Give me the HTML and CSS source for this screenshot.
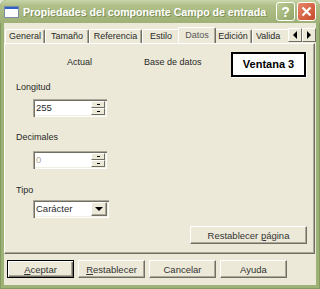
FILE: index.html
```html
<!DOCTYPE html>
<html lang="es">
<head>
  <meta charset="UTF-8" />
  <title>Propiedades del componente Campo de entrada</title>
  <link rel="stylesheet" href="styles.css">
</head>
<body>

<div class="window">
  <!-- Title bar -->
  <div class="titlebar">
    <svg class="app-icon" width="15" height="12" viewBox="0 0 15 12">
      <rect x="0.5" y="0.5" width="14" height="11" fill="#fff" stroke="#7a8aa8"/>
      <rect x="1" y="1" width="13" height="2" fill="#3060c8"/>
    </svg>
    <span class="title">Propiedades del componente Campo de entrada</span>
    <div class="tb-btn help">?</div>
    <div class="tb-btn close">
      <svg width="11" height="11" viewBox="0 0 11 11">
        <path d="M1.5 1.5 L9.5 9.5 M9.5 1.5 L1.5 9.5" stroke="#fff" stroke-width="2.2"/>
      </svg>
    </div>
  </div>

  <div class="client">
    <!-- Tabs -->
    <div class="tab-row">
      <div class="tabs">
        <div class="tab t-general">General</div>
        <div class="tab t-tamano">Tamaño</div>
        <div class="tab t-ref">Referencia</div>
        <div class="tab t-estilo">Estilo</div>
        <div class="tab t-datos active">Datos</div>
        <div class="tab t-edicion">Edición</div>
        <div class="tab t-valida">Valida</div>
      </div>
      <div class="tab-scroll">
        <div class="arrow-btn"><span class="tri left"></span></div>
        <div class="arrow-btn"><span class="tri right"></span></div>
      </div>
    </div>

    <!-- Tab page -->
    <div class="panel">
      <div class="heads">
        <span class="head-actual">Actual</span>
        <span class="head-bd">Base de datos</span>
        <div class="ventana">Ventana 3</div>
      </div>

      <div class="label l-longitud">Longitud</div>
      <div class="spin s-longitud">
        <div class="field">255</div>
        <div class="spin-btns">
          <div class="spin-btn"><span class="tiny"></span></div>
          <div class="spin-btn"><span class="tiny"></span></div>
        </div>
      </div>

      <div class="label l-decimales">Decimales</div>
      <div class="spin s-decimales disabled">
        <div class="field">0</div>
        <div class="spin-btns">
          <div class="spin-btn"><span class="tiny"></span></div>
          <div class="spin-btn"><span class="tiny"></span></div>
        </div>
      </div>

      <div class="label l-tipo">Tipo</div>
      <div class="combo">
        <div class="field">Carácter</div>
        <div class="drop-btn"><span class="tri down"></span></div>
      </div>

      <div class="panel-footer">
        <button class="btn btn-wide">Restablecer <u>p</u>ágina</button>
      </div>
    </div>

    <!-- Dialog buttons -->
    <div class="actions">
      <button class="btn default"><u>A</u>ceptar</button>
      <button class="btn"><u>R</u>establecer</button>
      <button class="btn">Cancelar</button>
      <button class="btn">Ayuda</button>
    </div>
  </div>
</div>

</body>
</html>
```

FILE: styles.css
```css
html { background: #dfe3d2; }

body {
  margin: 0;
  font-family: 'Liberation Sans', Arial, sans-serif;
  font-size: 9px;
  color: #2a2a2a;
}

.window {
  width: 320px;
  height: 289px;
  display: flex;
  flex-direction: column;
  background: #9db276;
  border-radius: 7px 7px 0 0;
  overflow: hidden;
  box-shadow: inset 1px 0 #86995f, inset -1px 0 #86995f, inset 0 -1px #86995f;
}

/* title bar */
.titlebar {
  height: 23px;
  display: flex;
  align-items: center;
  padding: 0 4px 0 4px;
  background: linear-gradient(#c9d5ab, #afbf88 25%, #a5b67d 70%, #9fb176);
  color: #fff;
}

.app-icon { margin: 1px 4px 0 0; flex: none; }

.title {
  flex: 1;
  font-weight: bold;
  font-size: 10.6px;
  white-space: nowrap;
  overflow: hidden;
  text-shadow: 1px 1px #7e9058;
}

.tb-btn {
  width: 17px;
  height: 17px;
  border: 1px solid #fff;
  border-radius: 3px;
  display: flex;
  align-items: center;
  justify-content: center;
  flex: none;
}

.help {
  background: linear-gradient(135deg, #bccb93, #8fa566);
  color: #fff;
  font-weight: bold;
  font-size: 14px;
  margin-right: 2px;
}

.close {
  background: linear-gradient(135deg, #e7866a, #c8492a);
}

/* client area */
.client {
  flex: 1;
  margin: 0 4px 4px;
  background: #ece9d8;
  display: flex;
  flex-direction: column;
}

.tab-row {
  height: 20px;
  display: flex;
  align-items: flex-end;
}

.tabs {
  flex: 1;
  display: flex;
  align-items: flex-end;
  overflow: hidden;
  padding-left: 1px;
  height: 20px;
}

.tab {
  height: 13px;
  line-height: 13px;
  text-align: center;
  border-top: 1px solid #fff;
  border-left: 1px solid #fff;
  border-right: 1px solid #716f64;
  box-shadow: inset -1px 0 #aca899;
  border-radius: 2px 2px 0 0;
  white-space: nowrap;
  overflow: hidden;
  flex: none;
}

.tab.active {
  height: 16px;
  line-height: 14px;
  margin: 0 -2px -1px;
  position: relative;
  z-index: 1;
  background: #ece9d8;
  color: #555;
}

.t-general { width: 38px; }
.t-tamano { width: 42px; }
.t-ref { width: 51px; }
.t-estilo { width: 36px; }
.t-datos { width: 36px; }
.t-edicion { width: 36px; }
.t-valida { width: 40px; text-align: left; padding-left: 3px; border-right: 0; box-shadow: none; }

.tab-scroll {
  display: flex;
  margin-bottom: 1px;
  flex: none;
}

.arrow-btn {
  width: 12px;
  height: 12px;
  border: 1px solid;
  border-color: #fff #716f64 #716f64 #fff;
  background: #ece9d8;
  display: flex;
  align-items: center;
  justify-content: center;
}

.tri { width: 0; height: 0; border: 4px solid transparent; }
.tri.left { border-right-color: #000; border-left-width: 0; }
.tri.right { border-left-color: #000; border-right-width: 0; }
.tri.down { border-top-color: #000; border-bottom-width: 0; border-width: 4px 4px 0; }

/* tab page */
.panel {
  height: 209px;
  margin-right: 1px;
  border: 1px solid;
  border-color: #fff #716f64 #716f64 #fff;
  box-shadow: inset -1px -1px #aca899;
  display: flex;
  flex-direction: column;
  padding-left: 11px;
}

.heads {
  display: flex;
  align-items: center;
  height: 24px;
  margin-top: 8px;
}

.head-actual, .head-bd { margin-bottom: 4px; }
.head-actual { margin-left: 51px; width: 77px; }
.head-bd { width: 87px; }

.ventana {
  width: 71px;
  height: 21px;
  border: 2px solid #000;
  box-shadow: 1px 1px #fff;
  background: #fff;
  font-weight: bold;
  font-size: 11px;
  display: flex;
  align-items: center;
  justify-content: center;
  color: #000;
}

.label { height: 12px; line-height: 12px; }
.l-longitud { margin-top: 5px; }
.l-decimales { margin-top: 14px; }
.l-tipo { margin-top: 15px; }

.spin, .combo {
  display: flex;
  margin-left: 17px;
  height: 14px;
  padding: 2px;
  background: #fff;
  box-shadow: inset 1px 1px #aca899, inset 2px 2px #716f64, inset -1px -1px #fff, inset -2px -2px #f1efe2;
}

.spin { width: 70px; }
.s-longitud { margin-top: 6px; }
.s-decimales { margin-top: 8px; }

.field {
  flex: 1;
  line-height: 14px;
  padding-left: 1px;
  font-size: 9.5px;
}

.disabled .field { color: #aca899; }

.spin-btns {
  width: 14px;
  display: flex;
  flex-direction: column;
}

.spin-btn {
  flex: 1;
  border: 1px solid;
  border-color: #fff #716f64 #716f64 #fff;
  background: #ece9d8;
  display: flex;
  align-items: center;
  justify-content: center;
}

.tiny { width: 3px; height: 1px; background: #000; }

.combo {
  width: 72px;
  margin-top: 4px;
}

.drop-btn {
  width: 14px;
  border: 1px solid;
  border-color: #fff #716f64 #716f64 #fff;
  box-shadow: inset -1px -1px #aca899;
  background: #ece9d8;
  display: flex;
  align-items: center;
  justify-content: center;
}

.panel-footer {
  display: flex;
  justify-content: flex-end;
  margin-top: 8px;
  padding-right: 7px;
}

/* buttons */
.btn {
  height: 18px;
  padding: 0;
  font-family: inherit;
  font-size: 9.5px;
  color: #333;
  background: #ece9d8;
  border: 1px solid;
  border-color: #fff #716f64 #716f64 #fff;
  box-shadow: inset -1px -1px #aca899;
}

.btn-wide { width: 117px; }

.btn.default {
  border-color: #000;
  box-shadow: inset 1px 1px #fff, inset -1px -1px #716f64, inset -2px -2px #aca899;
}

.actions {
  display: flex;
  gap: 4px;
  padding: 6px 0 0 3px;
}

.actions .btn { width: 67px; }
```
